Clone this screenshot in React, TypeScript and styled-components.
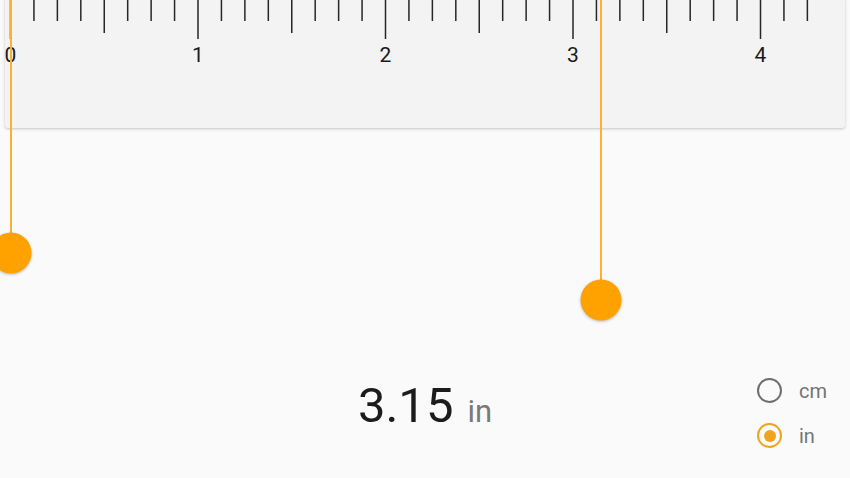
import React from "react";
import styled, { createGlobalStyle } from "styled-components";

const GlobalStyle = createGlobalStyle`
  html, body {
    margin: 0;
    padding: 0;
    background: #fafafa;
    font-family: Roboto, "Noto Sans", "Liberation Sans", sans-serif;
  }
  #root { height: 478px; }
`;

const PX_PER_INCH = 187.5;
const ORIGIN = 5.5; // x of 0 inside the ruler card
const TICKS = 34;
const AMBER = "#ffa200";

const Page = styled.div`
  position: relative;
  width: 850px;
  height: 478px;
  overflow: hidden;
  display: flex;
  flex-direction: column;
  background: #fafafa;
`;

const RulerCard = styled.div`
  position: relative;
  height: 132px;
  margin: -4px 5px 0 5px;
  background: #f3f3f3;
  border-radius: 3px;
  box-shadow: 0 1px 3px rgba(0, 0, 0, 0.22);
  flex: none;
`;

const Scale = styled.svg`
  position: absolute;
  left: 0;
  top: 4px;
  display: block;
`;

const TickLabel = styled.span`
  position: absolute;
  top: 47.5px;
  transform: translateX(-50%);
  font-size: 21px;
  line-height: 22px;
  color: #1a1a1a;
`;

const Spacer = styled.div`
  flex: 1;
`;

const Footer = styled.div`
  flex: none;
  height: 113px;
  display: grid;
  grid-template-columns: 1fr auto 1fr;
  align-items: start;
  padding-top: 3px;
  box-sizing: border-box;
`;

const Reading = styled.div`
  grid-column: 2;
  margin-top: 13px;
  display: flex;
  align-items: baseline;
  gap: 14px;
`;

const Value = styled.span`
  font-size: 49px;
  line-height: 50px;
  color: #1c1c1c;
`;

const Unit = styled.span`
  font-size: 31px;
  color: #7a7a7a;
`;

const RadioGroup = styled.div`
  grid-column: 3;
  justify-self: end;
  width: 93px;
  display: flex;
  flex-direction: column;
`;

const RadioRow = styled.label`
  height: 45px;
  display: flex;
  align-items: center;
  gap: 17px;
  font-size: 20px;
  color: #757575;
`;

const RadioCircle = styled.span<{ $checked: boolean }>`
  width: 25px;
  height: 25px;
  box-sizing: border-box;
  border-radius: 50%;
  border: 2.5px solid ${(p) => (p.$checked ? "#f0a31c" : "#6e6e6e")};
  display: flex;
  align-items: center;
  justify-content: center;
  flex: none;
  &::after {
    content: "";
    width: 12px;
    height: 12px;
    border-radius: 50%;
    background: #f0a31c;
    display: ${(p) => (p.$checked ? "block" : "none")};
  }
`;

const HandleLine = styled.div`
  position: absolute;
  top: 0;
  width: 1.5px;
  background: #ffb02e;
  z-index: 2;
  pointer-events: none;
`;

const HandleKnob = styled.div`
  position: absolute;
  z-index: 3;
  width: 41px;
  height: 41px;
  border-radius: 50%;
  background: ${AMBER};
  box-shadow: 0 1px 3px rgba(0, 0, 0, 0.25);
  transform: translate(-50%, -50%);
`;

function Handle({ x, y }: { x: number; y: number }) {
  return (
    <>
      <HandleLine style={{ left: x, height: y }} />
      <HandleKnob style={{ left: x + 1, top: y }} />
    </>
  );
}

function Ruler() {
  const ticks = Array.from({ length: TICKS + 1 }, (_, i) => i);
  return (
    <RulerCard>
      <Scale width={840} height={42}>
        {ticks.map((i) => {
          const x = ORIGIN + (i * PX_PER_INCH) / 8;
          const len = i % 8 === 0 ? 39 : i % 4 === 0 ? 33 : 21;
          return (
            <line
              key={i}
              x1={x}
              x2={x}
              y1={0}
              y2={len}
              stroke="#262626"
              strokeWidth={1.5}
            />
          );
        })}
      </Scale>
      {[0, 1, 2, 3, 4].map((n) => (
        <TickLabel key={n} style={{ left: ORIGIN + n * PX_PER_INCH }}>
          {n}
        </TickLabel>
      ))}
    </RulerCard>
  );
}

export default function App() {
  return (
    <>
      <GlobalStyle />
      <Page>
        <Ruler />
        <Spacer />
        <Footer>
          <Reading>
            <Value>3.15</Value>
            <Unit>in</Unit>
          </Reading>
          <RadioGroup>
            <RadioRow>
              <RadioCircle $checked={false} />
              cm
            </RadioRow>
            <RadioRow>
              <RadioCircle $checked={true} />
              in
            </RadioRow>
          </RadioGroup>
        </Footer>
        <Handle x={10} y={253} />
        <Handle x={600} y={300} />
      </Page>
    </>
  );
}
